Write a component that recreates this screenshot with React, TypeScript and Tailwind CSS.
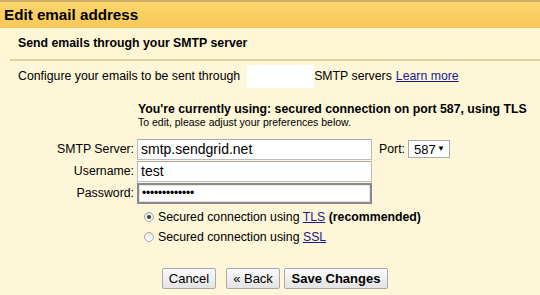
import React from "react";

const font = { fontFamily: '"Liberation Sans", Arial, sans-serif' };

function Input({ children, focused }: { children: React.ReactNode; focused?: boolean }) {
  return (
    <div
      className={
        "w-[235px] h-[21px] bg-white flex items-center pl-[3px] text-[14px] text-black leading-none " +
        (focused
          ? "border-2 border-[#8a8a8a] shadow-[inset_0_0_0_1px_#e6e6e6]"
          : "border border-[#bcbcbc] border-t-[#a8a8a8]")
      }
    >
      {children}
    </div>
  );
}

function Radio({ checked }: { checked?: boolean }) {
  return (
    <span className="w-[10px] h-[10px] rounded-full border border-[#a6a6a6] bg-gradient-to-b from-[#e4e4e4] to-[#ffffff] flex items-center justify-center">
      {checked && <span className="w-[4px] h-[4px] rounded-full bg-[#3c3c3c]" />}
    </span>
  );
}

function Btn({ children, bold, w }: { children: React.ReactNode; bold?: boolean; w: string }) {
  return (
    <div
      className={
        "h-[21px] border border-[#a9a9a9] rounded-[2px] bg-gradient-to-b from-[#fbfbfb] to-[#e3e3e3] flex items-center justify-center text-[13px] text-black leading-none " +
        (bold ? "font-bold " : "") +
        w
      }
    >
      {children}
    </div>
  );
}

export default function App() {
  return (
    <div className="w-[540px] h-[295px] overflow-hidden bg-[#fdf6d9] text-black" style={font}>
      <div className="h-[2px] bg-[#cfae6a]" />
      <div className="h-[26px] bg-gradient-to-b from-[#fbd56b] to-[#f7c858] flex items-center pl-[4px]">
        <span className="text-[15.2px] font-bold leading-none">Edit email address</span>
      </div>
      <div className="h-[31px] bg-[#fff6d6] flex items-center pl-[18px]">
        <span className="text-[12.3px] font-bold leading-none">Send emails through your SMTP server</span>
      </div>
      <div className="ml-[10px] h-[2px] bg-[#dcd49f]" />

      <div className="flex items-center pl-[18px] mt-[4px] h-[23px] text-[12.3px] leading-none">
        <span>Configure your emails to be sent through</span>
        <span className="w-[67px] h-[23px] bg-white ml-[7px] rounded-[1px]" />
        <span>SMTP servers</span>
        <span className="ml-[4px] text-[#1a1a8c] underline">Learn more</span>
      </div>

      <div className="pl-[138px] mt-[15px]">
        <div className="text-[12.3px] font-bold leading-none">
          You're currently using: secured connection on port 587, using TLS
        </div>
        <div className="text-[10.5px] leading-none mt-[2px]">To edit, please adjust your preferences below.</div>
      </div>

      <div className="mt-[11px] flex flex-col gap-[1px] text-[12.3px] leading-none">
        <div className="flex items-center">
          <span className="w-[135px] text-right pr-[1px]">SMTP Server:</span>
          <div className="ml-[2px]">
            <Input>smtp.sendgrid.net</Input>
          </div>
          <span className="ml-[7px]">Port:</span>
          <div className="ml-[3px] w-[42px] h-[18px] bg-white border border-[#a9a9a9] flex items-center justify-between pl-[5px] pr-[4px] text-[13px]">
            <span>587</span>
            <span className="text-[8px]">▼</span>
          </div>
        </div>
        <div className="flex items-center">
          <span className="w-[135px] text-right pr-[1px]">Username:</span>
          <div className="ml-[2px]">
            <Input>test</Input>
          </div>
        </div>
        <div className="flex items-center">
          <span className="w-[135px] text-right pr-[1px]">Password:</span>
          <div className="ml-[2px]">
            <Input focused>
              <span className="text-[12px] tracking-[-0.2px]">•••••••••••••</span>
            </Input>
          </div>
        </div>
      </div>

      <div className="mt-[7px] pl-[144px] flex flex-col gap-[8px] text-[12.3px] leading-none">
        <div className="flex items-center h-[12px]">
          <Radio checked />
          <span className="ml-[4px]">
            Secured connection using <span className="text-[#1a1a8c] underline">TLS</span>{" "}
            <span className="font-bold">(recommended)</span>
          </span>
        </div>
        <div className="flex items-center h-[12px]">
          <Radio />
          <span className="ml-[4px]">
            Secured connection using <span className="text-[#1a1a8c] underline">SSL</span>
          </span>
        </div>
      </div>

      <div className="mt-[25px] pl-[162px] flex items-center">
        <Btn w="w-[54px]">Cancel</Btn>
        <div className="ml-[10px]">
          <Btn w="w-[54px]">« Back</Btn>
        </div>
        <div className="ml-[4px]">
          <Btn bold w="w-[104px]">Save Changes</Btn>
        </div>
      </div>
    </div>
  );
}
